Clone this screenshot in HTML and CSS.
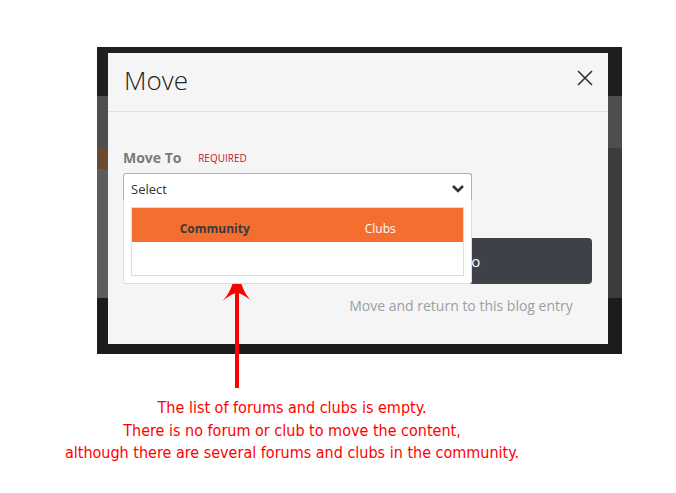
FILE: index.html
```html
<!DOCTYPE html>
<html lang="en">
<head>
    <meta charset="UTF-8">
    <title>Move</title>
    <link rel="stylesheet" href="styles.css">
</head>
<body>
    <div class="stage">
        <!-- Dimmed page behind the dialog -->
        <div class="backdrop">
            <div class="modal">
                <div class="modal-header">
                    <h1>Move</h1>
                    <span class="close">
                        <svg width="16" height="16" viewBox="0 0 16 16"><path d="M1 1 L15 15 M15 1 L1 15" stroke="#333" stroke-width="1.6" fill="none"/></svg>
                    </span>
                </div>

                <div class="modal-body">
                    <div class="field-label">Move To <span class="required">Required</span></div>

                    <div class="select-wrap">
                        <div class="select">
                            <span>Select</span>
                            <svg width="14" height="10" viewBox="0 0 14 10"><path d="M2 2 L7 7 L12 2" stroke="#333" stroke-width="2.6" fill="none"/></svg>
                        </div>
                        <!-- Open dropdown: tabs but no items -->
                        <div class="dropdown">
                            <div class="tabs">
                                <div class="tab active">Community</div>
                                <div class="tab">Clubs</div>
                            </div>
                            <div class="tab-list"></div>
                        </div>
                    </div>

                    <div class="actions">
                        <button class="btn-dark">Move to</button>
                        <div class="alt-link">Move and return to this blog entry</div>
                    </div>
                </div>
            </div>
        </div>

        <div class="note">
            The list of forums and clubs is empty.<br>
            There is no forum or club to move the content,<br>
            although there are several forums and clubs in the community.
        </div>

        <svg class="arrow" width="34" height="130" viewBox="0 0 34 130">
            <path d="M16 2 C17 14 21 33 31 41 C25 37 20 33 16 33 C12 33 7 37 1 41 C11 33 15 14 16 2 Z" fill="#f00"/>
            <rect x="14" y="32" width="4" height="96" fill="#f00"/>
        </svg>
    </div>
</body>
</html>
```

FILE: styles.css
```css
body {
    margin: 0;
    padding: 0;
    background-color: #fff;
    font-family: "Open Sans", Arial, sans-serif;
}

.stage {
    position: relative;
    width: 676px;
    height: 493px;
    padding: 47px 0 0 97px;
    box-sizing: border-box;
}

.backdrop {
    width: 525px;
    height: 307px;
    padding: 6px 0 0 11px;
    box-sizing: border-box;
    background:
        linear-gradient(to bottom, transparent 0 101px, #6b4a30 101px 122px, #5c5c5c 122px 251px, transparent 251px) left top / 11px 100% no-repeat,
        linear-gradient(to bottom, #1f1f1f 0 49px, #4e4e4e 49px 101px, #3c3c3c 101px 251px, #1c1c1c 251px);
}

.modal {
    width: 500px;
    height: 291px;
    background-color: #f5f5f5;
}

.modal-header {
    height: 58px;
    display: flex;
    align-items: center;
    justify-content: space-between;
    padding: 0 16px;
    border-bottom: 1px solid #e3e3e3;
}

.modal-header h1 {
    margin: 0 0 4px 0;
    font-size: 26px;
    font-weight: 300;
    color: #222;
}

.close {
    display: flex;
    margin-right: -1px;
    margin-top: -9px;
}

.modal-body {
    padding: 36px 15px 0 15px;
}

.field-label {
    font-size: 14px;
    font-weight: 700;
    color: #7a7a7a;
    margin-bottom: 6px;
}

.required {
    font-size: 10px;
    font-weight: 400;
    text-transform: uppercase;
    color: #c3202a;
    margin-left: 13px;
    vertical-align: 1px;
}

.select-wrap {
    position: relative;
    width: 349px;
}

.select {
    height: 28px;
    display: flex;
    align-items: center;
    justify-content: space-between;
    padding: 2px 6px 0 7px;
    box-sizing: border-box;
    background-color: #fff;
    border: 1px solid #8cb8e6;
    border-bottom: none;
    border-radius: 3px 3px 0 0;
    font-size: 13px;
    color: #333;
}

.dropdown {
    position: absolute;
    top: 27px;
    left: 0;
    right: 0;
    z-index: 2;
    padding: 7px 7px 7px 7px;
    background-color: #fff;
    border: 1px solid #ddd;
    border-top: none;
    border-radius: 0 0 3px 3px;
}

.tabs {
    display: grid;
    grid-template-columns: 1fr 1fr;
    background-color: #f46e2f;
    border: 1px solid #ddd;
    border-bottom: none;
}

.tab {
    height: 34px;
    line-height: 34px;
    padding-top: 4px;
    box-sizing: border-box;
    text-align: center;
    font-size: 12px;
    color: #fff;
}

.tab.active {
    font-weight: 700;
    color: #3a3a3a;
}

.tab-list {
    height: 33px;
    border: 1px solid #ddd;
    border-top: none;
}

.actions {
    width: 298px;
    margin: 37px 0 0 189px;
}

.btn-dark {
    display: block;
    width: 280px;
    height: 46px;
    border: none;
    border-radius: 4px;
    background-color: #3e4148;
    color: #fff;
    font-family: inherit;
    font-size: 15px;
}

.alt-link {
    margin-top: 12px;
    text-align: center;
    font-size: 14px;
    color: #9aa0a6;
}

.note {
    width: 584px;
    margin: 43px 0 0 -97px;
    text-align: center;
    font-family: "DejaVu Sans Condensed", Tahoma, sans-serif;
    font-size: 16px;
    line-height: 22.5px;
    color: #f00;
}

.arrow {
    position: absolute;
    left: 221px;
    top: 260px;
}
```
